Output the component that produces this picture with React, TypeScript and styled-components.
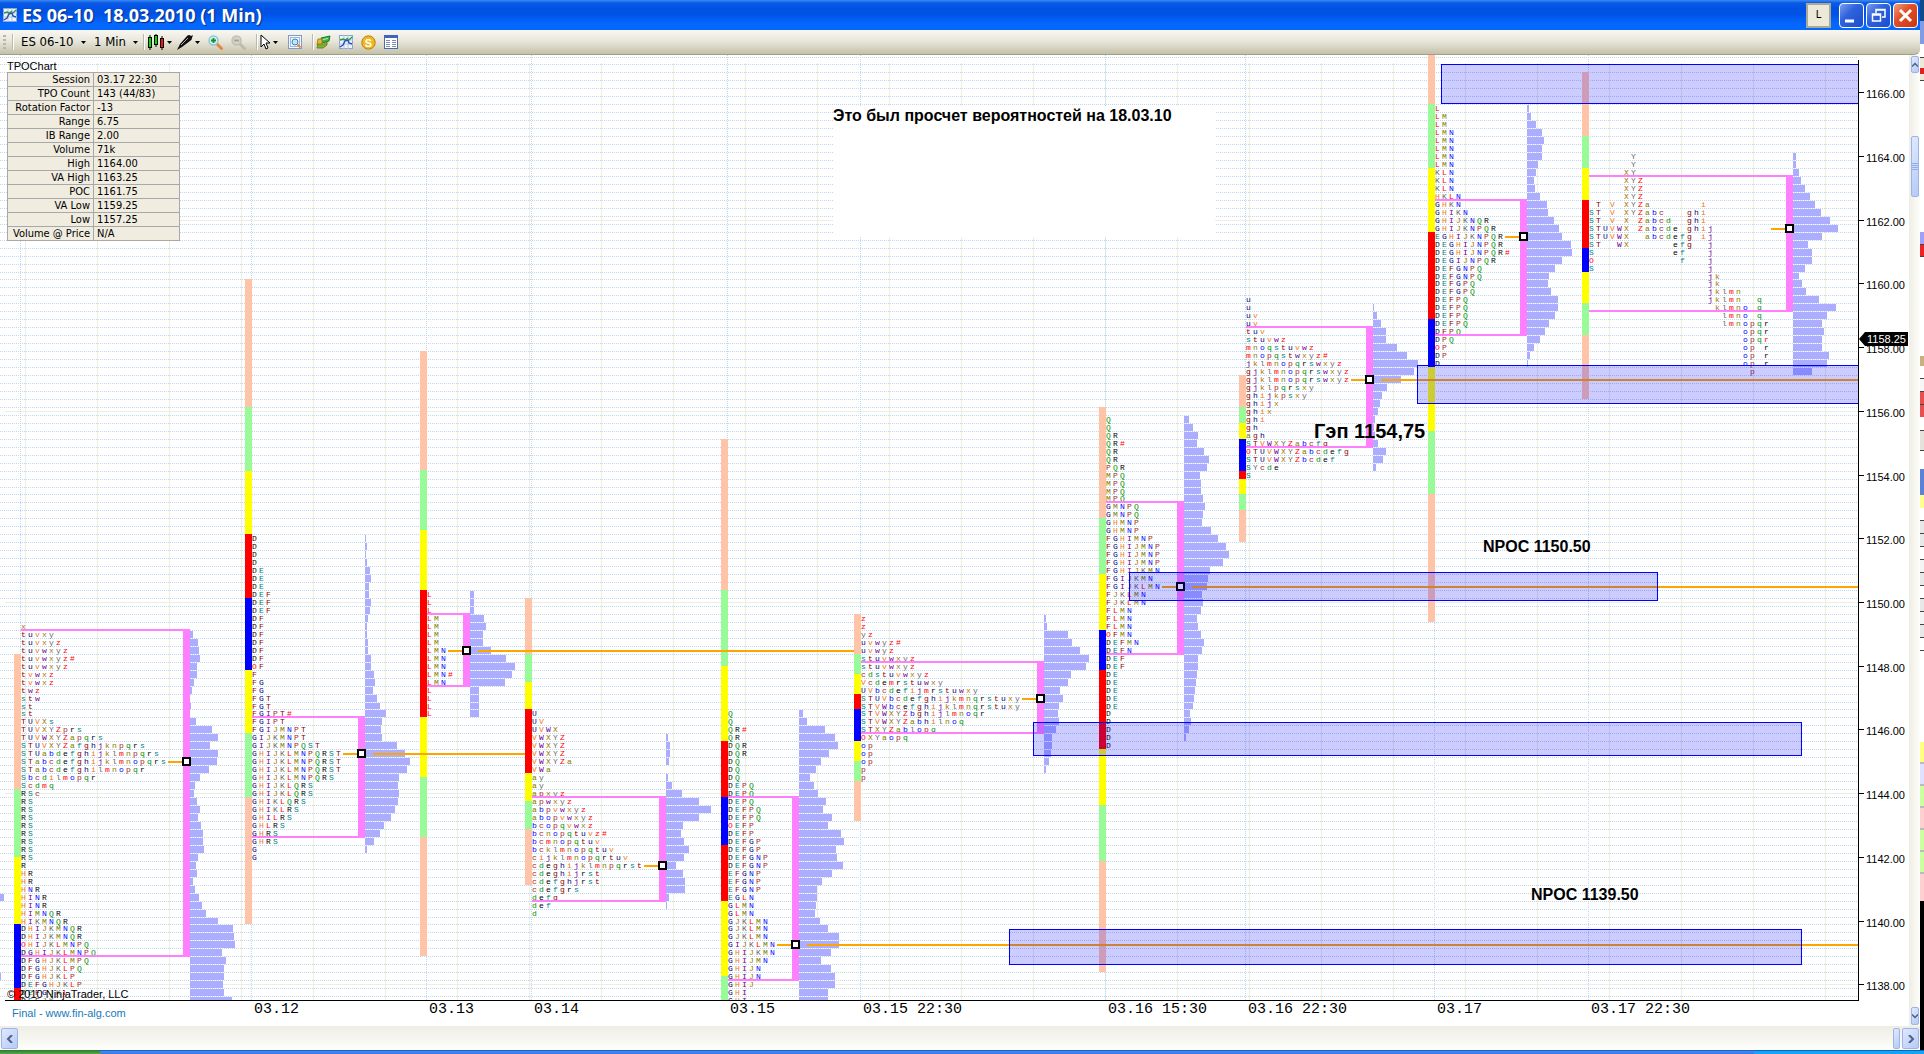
import React from "react";
import styled, { createGlobalStyle } from "styled-components";

const UI = '"DejaVu Sans Condensed", "Noto Sans", sans-serif';
const ARIAL = '"Liberation Sans", Arial, sans-serif';
const MONO = '"Liberation Mono", "Courier New", monospace';

const GlobalStyle = createGlobalStyle`
  * { box-sizing: border-box; }
  body { margin: 0; background: #fff; font-family: ${UI}; color: #000; }
`;

/* ---------- window frame ---------- */

const Screen = styled.div`
  display: flex;
  flex-direction: column;
  height: 100vh;
  overflow: hidden;
`;

const Desktop = styled.div`
  display: flex;
  flex: 1;
  min-height: 0;
`;

const Window = styled.main`
  display: flex;
  flex-direction: column;
  flex: 1;
  min-width: 0;
`;

const TitleBar = styled.header`
  display: flex;
  align-items: center;
  gap: 2px;
  height: 30px;
  padding: 0 2px 0 3px;
  background: linear-gradient(#3a8bf0 0, #0a5ae8 3px, #0053e1 8px, #0053e6 14px, #0468ff 24px, #0468ff 100%);
`;

const Title = styled.h1`
  flex: 1;
  margin: 0 0 0 3px;
  font: 700 18px/26px "Open Sans", "Noto Sans", sans-serif;
  color: #fff;
  text-shadow: 1px 1px 1px #0a2a80;
  white-space: pre;
`;

const LinkButton = styled.button`
  width: 25px;
  height: 25px;
  margin-right: 6px;
  padding: 0;
  border: 2px solid #aca899;
  background: #ece9d8;
  font: 11px/16px ${UI};
`;

const CaptionButton = styled.button<{ $close?: boolean }>`
  display: flex;
  align-items: center;
  justify-content: center;
  width: 25px;
  height: 25px;
  padding: 0;
  border: 1px solid #fff;
  border-radius: 4px;
  background: ${(p) =>
    p.$close
      ? "linear-gradient(135deg, #f0a080, #e2502a 40%, #c8370f)"
      : "linear-gradient(135deg, #7a9df0, #2f62dc 40%, #1a4ed0)"};
`;

const ToolBar = styled.nav`
  display: flex;
  align-items: center;
  height: 25px;
  padding-left: 3px;
  border-bottom: 1px solid #a2a07c;
  border-radius: 0 0 6px 0;
  background: linear-gradient(#f8f7f2, #e9e7dc 45%, #c3c1a9);
`;

const Grip = styled.span`
  width: 3px;
  height: 15px;
  margin-right: 4px;
  background: repeating-linear-gradient(#b9b7a5 0 2px, transparent 2px 4px);
`;

const Divider = styled.span`
  width: 2px;
  height: 16px;
  margin: 0 2px;
  border-left: 1px solid #bcbaa6;
  border-right: 1px solid #fff;
`;

const PickLabel = styled.label`
  display: flex;
  align-items: center;
  gap: 7px;
  margin: 0 3px 0 5px;
`;

const Pick = styled.select`
  appearance: none;
  border: 0;
  padding: 0;
  background: none;
  font: 13px/18px ${UI};
  color: #000;
`;

const Tool = styled.button<{ $gap?: number }>`
  display: flex;
  align-items: center;
  gap: 2px;
  padding: 0;
  margin-right: ${(p) => p.$gap ?? 8}px;
  border: 0;
  background: none;
`;

const Body = styled.div`
  display: flex;
  flex: 1;
  min-height: 0;
`;

const Chart = styled.section`
  position: relative;
  display: flex;
  flex-direction: column;
  flex: 1;
  min-width: 0;
  background: #fff;
`;

const PlotRow = styled.div`
  display: flex;
  flex: 1;
  min-height: 0;
`;

const Plot = styled.svg`
  flex: 1;
  min-width: 0;
  height: 100%;
  overflow: hidden;
`;

const PriceAxis = styled.svg`
  width: 51px;
  height: 100%;
  overflow: visible;
`;

const TimeAxis = styled.svg`
  width: 100%;
  height: 26px;
`;

/* ---------- overlays on the chart ---------- */

const InfoPanel = styled.div`
  position: absolute;
  left: 7px;
  top: 5px;
  font: 11px/12px ${ARIAL};
`;

const InfoTable = styled.table`
  width: 173px;
  border-collapse: collapse;
  table-layout: fixed;
  background: #f0ede0;
  font: 11px/13px ${UI};

  th, td {
    height: 14px;
    padding: 0 3px;
    border: 1px solid #a8a8a8;
    font-weight: normal;
    text-align: left;
    white-space: nowrap;
  }
  th {
    width: 86px;
    text-align: right;
  }
`;

const Note = styled.p<{ $x: number; $y: number; $size?: number }>`
  position: absolute;
  left: ${(p) => p.$x}px;
  top: ${(p) => p.$y}px;
  margin: 0;
  font: bold ${(p) => p.$size ?? 16}px/20px ${ARIAL};
  white-space: nowrap;
`;

const NoteBox = styled(Note)`
  width: 382px;
  height: 131px;
  background: #fff;
`;

const SiteLink = styled.a`
  position: absolute;
  left: 12px;
  bottom: 6px;
  font: 11px/14px ${ARIAL};
  color: #2079b8;
  text-decoration: none;
`;

/* ---------- scroll bars ---------- */

const VScroll = styled.div`
  display: flex;
  flex-direction: column;
  justify-content: space-between;
  width: 11px;
  padding: 1px 1px 1px 2px;
  background: linear-gradient(90deg, #eeede5, #fefefb);
`;

const HScroll = styled.div`
  display: flex;
  justify-content: space-between;
  height: 24px;
  padding: 2px 1px 1px;
  background: linear-gradient(#eeede5, #fefefb);
`;

const ScrollGroup = styled.div<{ $down?: boolean }>`
  display: flex;
  flex-direction: ${(p) => (p.$down ? "column" : "row")};
  gap: ${(p) => (p.$down ? 63 : 2)}px;
`;

const ScrollButton = styled.button<{ $w: number; $h: number }>`
  display: flex;
  align-items: center;
  justify-content: center;
  width: ${(p) => p.$w}px;
  height: ${(p) => p.$h}px;
  padding: 0;
  border: 1px solid #9db4e4;
  border-radius: 2px;
  background: linear-gradient(135deg, #dfe8fe, #b6cbf8);
`;

const Taskbar = styled.footer`
  display: flex;
  height: 4px;
  background: linear-gradient(#1f5fd0 0 1px, #3d86ea 1px 3px, #2b6fe0);
`;

const StartEdge = styled.span`
  width: 101px;
  border-radius: 0 4px 0 0;
  background: linear-gradient(#2c7a2c, #55a84f);
`;

const TrayEdge = styled.span`
  width: 170px;
  margin-left: auto;
  background: linear-gradient(#0c62c8 0 1px, #15a5f0 1px);
`;

/* ---------- neighbouring window, seen as a thin edge ---------- */

const Edge = styled.aside`
  display: flex;
  flex-direction: column;
  width: 4px;
  overflow: hidden;
  background: #fff;
`;

const EdgeCell = styled.span<{ $h: number; $c: string; $b?: boolean }>`
  flex: none;
  height: ${(p) => p.$h}px;
  background: ${(p) => p.$c};
  border-bottom: ${(p) => (p.$b ? "1px solid #444" : "0")};
`;

const EDGE: [number, string, boolean?][] = [
  [21, "#0c4a8c"], [23, "#7f9ce4"], [14, "#ffffff", true], [10, "#ece9d8"], [6, "#e02020"], [7, "#ece9d8", true],
  [151, "#ffffff"], [13, "#a0a0fa", true], [12, "#ee2222", true], [99, "#ffffff"], [10, "#c9b080"], [13, "#ffffff", true],
  [13, "#f6f6f6", true], [13, "#e85050", true], [12, "#e85050"], [14, "#ffffff", true], [20, "#e4e2da", true], [18, "#ffffff"],
  [26, "#5b82d6"], [13, "#ffff90"], [13, "#ffffff", true], [13, "#e8e8e8", true], [13, "#e8e8e8", true], [13, "#ffffff", true],
  [13, "#f4f4f4", true], [13, "#e8e8e8", true], [13, "#ffffff", true], [13, "#e8e8e8", true], [13, "#f4f4f4", true],
  [13, "#e8e8e8", true], [13, "#ffffff", true], [91, "#ffffff"], [20, "#ffff80"], [2, "#bbb"], [20, "#e0e0ff"], [2, "#bbb"],
  [20, "#ccffa0"], [2, "#bbb"], [20, "#ffd0d0"], [2, "#bbb"], [20, "#ccffa0"], [2, "#bbb"], [20, "#ccffa0"], [2, "#bbb"],
  [27, "#ffd0d0"], [160, "#000000"],
];

/* ---------- market profile data ---------- */

type Session = {
  x: number; // left edge of the first letter column
  bar: [number, string][]; // [top, colour] of each range segment
  barEnd: number;
  first: number; // row of the first letters
  rows: string[];
  spread?: boolean; // one column for each period instead of packed rows
  va: [number, number]; // value area: first row, row after the last
  vaX: number; // left edge of the value area bar
  poc: number;
  pocFrom: number;
  extend?: number; // where the naked POC line ends
  volFirst: number;
  vol: number[];
};

const P = "#ffc4a8";
const G = "#98fb98";
const Y = "#ffff00";
const R = "#ff0000";
const B = "#0000ff";
const END = 4000;

const rep = (s: string, n: number): string[] => Array(n).fill(s);

const SESSIONS: Session[] = [
  {
    x: 21, bar: [[654, P], [789, G], [857, Y], [924, B], [988, R]], barEnd: 1000, first: 71,
    rows: ["x", "tuvxy", "tuvxyz", "tuvwxyz", "tuvwxyz#", "tuvwxyz", "tvwxz", "tvwxz", "twz", "stw", "st", "st", "TUVXs",
      "TUVXYZprs", "TUVWXYZapqrs", "STUVXYZafghjknpqrs", "STUabdefghijklmnpqrs", "STabcdefghijklmnopqrs", "STabcdefghilmnopqr",
      "Sbcdilmopqr", "Scdmq", "RSc", ...rep("RS", 8), "R", "HR", "HR", "HNR", "HINR", "HINR", "HIMNQR", "HIKMNQR", "DHIJKMNQR",
      "DHIJKMNQR", "OHIJKLMNPQ", "DGHIJKLMNPQ", "DFGHJKLMPQ", "DFGHJKLPQ", "DFGHJKLP", "DEFGHJKLP", "DEFGJKL", "DEFJK"],
    va: [72, 113], vaX: 183, poc: 88, pocFrom: 168, volFirst: 72,
    vol: [3, 8, 9, 10, 7, 7, 4, 2, 0, 1, 0, 6, 22, 28, 20, 28, 27, 19, 10, 5, 4, 7, 10, 8, 11, 13, 13, 14, 8, 6, 7, 3, 5, 9, 12,
      16, 28, 43, 44, 45, 32, 36, 34, 34, 33, 34, 42],
  },
  {
    x: 252, bar: [[279, P], [407, G], [471, Y], [534, R], [598, B], [670, Y], [733, G], [797, P]], barEnd: 924, first: 60,
    rows: [...rep("D", 4), ...rep("DE", 3), ...rep("DEF", 3), ...rep("DF", 6), "OF", "F", "FG", "FG", "FGT", "FGT", "FGIPT#",
      "FGIPT", "FGIJMNPT", "GIJKMNPT", "GIJKMNPQST", ...rep("GHIJKLMNPQRST", 3), "GHIJKLMNPQRS", "GHIJKLQRS", "GHIJKLQRS",
      "GHIKLQRS", "GHIKLRS", "GHILRS", "GHLRS", "GHRS", "GHRS", "G", "G"],
    va: [83, 98], vaX: 358, poc: 87, pocFrom: 343, extend: 525, volFirst: 60,
    vol: [1, 2, 1, 2, 5, 6, 4, 4, 6, 5, 3, 2, 2, 3, 3, 6, 6, 9, 10, 8, 12, 15, 21, 17, 16, 17, 32, 40, 45, 42, 34, 33, 34, 33,
      30, 26, 19, 15, 9, 2],
  },
  {
    x: 427, bar: [[351, P], [470, G], [530, Y], [590, R], [717, Y], [777, G], [837, P]], barEnd: 956, first: 67,
    rows: ["L", "L", "L", ...rep("LM", 4), ...rep("LMN", 3), "LMN#", "LMN", ...rep("L", 4)],
    va: [70, 79], vaX: 463, poc: 74, pocFrom: 448, extend: 854, volFirst: 67,
    vol: [4, 4, 4, 14, 16, 13, 13, 21, 36, 45, 42, 35, 9, 9, 9, 9],
  },
  {
    x: 532, bar: [[598, P], [654, G], [682, Y], [709, R], [773, Y], [801, G], [829, P]], barEnd: 885, first: 82,
    rows: ["U", "UV", "UVWX", ...rep("VWXYZ", 3), "VWXYZa", "VWa", "ay", "ay", "apxyz", "apwxyz", "abpvwxyz", "abopvwxyz",
      "bcopqvwxz", "bcnopqtuvz#", "bcmnopqtuv", "bcklmnopqtuv", "cijklmnopqrtuv", "cdeghijklmnpqrst", "cdeghijrst",
      "cdefghjrst", "cdefgrs", "defg", "def", "d"],
    va: [93, 106], vaX: 659, poc: 101, pocFrom: 644, volFirst: 85,
    vol: [2, 4, 4, 3, 0, 2, 6, 16, 33, 45, 33, 17, 15, 18, 23, 18, 10, 17, 19, 19, 3, 1],
  },
  {
    x: 728, bar: [[439, P], [590, G], [666, Y], [741, R], [797, B], [845, R], [901, Y], [976, G]], barEnd: 1000, first: 82,
    rows: ["Q", "Q", "QR#", "QR", "DQR", "DQR", "DQ", "DQ", "DQ", ...rep("DEPQ", 3), "DEFPQ", "DEFPQ", "OEFP", "DEFP", "DEFGP",
      "DEFGP", "DEFGNP", "DEFGNP", ...rep("EFGNP", 3), "EGLN", "GLMN", "GLMN", ...rep("GJKLMN", 3), "GIJKLMN", "GHIJKMN",
      "GHIJMN", "GHIJN", "GHIJN", "GHIJ", "GHI", "GHI"],
    va: [93, 116], vaX: 792, poc: 111, pocFrom: 777, extend: END, volFirst: 82,
    vol: [4, 8, 26, 36, 39, 30, 22, 17, 11, 15, 19, 27, 24, 33, 29, 42, 45, 37, 38, 44, 33, 23, 18, 18, 17, 16, 21, 29, 40, 40,
      32, 22, 32, 36, 36, 29, 29],
  },
  {
    x: 861, bar: [[614, P], [654, G], [674, Y], [694, R], [709, B], [741, Y], [761, G], [781, P]], barEnd: 821, first: 70,
    rows: ["z", "z", "yz", "uvwyz#", "uvwyz", "stuvwxyz", "stuvwxyz", "cdstuvwxyz", "Vcdemrstuwxy", "UVbcdefijmrstuwxy",
      "STUVbcdefghijkmnqrstuxy", "STVWbcefghijklmnqrstuxy", "STVWXYZbghijlmnoqr", "STVWXYZabhilnoq", "STXYZablopq", "OXYaopq",
      "op", "op", "op", "p", "p"],
    va: [76, 85], vaX: 1037, poc: 80, pocFrom: 1022, volFirst: 70,
    vol: [2, 3, 24, 28, 36, 45, 42, 27, 24, 16, 19, 15, 14, 15, 12, 8, 8, 7, 5, 2],
  },
  {
    x: 1106, bar: [[407, P], [518, G], [574, Y], [630, B], [670, R], [749, Y], [805, G], [861, P]], barEnd: 972, first: 45,
    rows: ["Q", "Q", "QR", "QR#", "QR", "QR", "PQR", ...rep("MPQ", 4), "GMNPQ", "GMNPQ", "GHMNP", "GHMNP", "FGHIMNP",
      ...rep("FGHIJMNP", 3), "FGHIJKMN", "FGIJKMN", "FGIJKLMN", "FJKLMN", "FJKLMN", ...rep("FLMN", 3), "OFMN", "DEFMN", "DEFN",
      "DEF", "DEF", ...rep("DE", 5), ...rep("D", 5)],
    va: [56, 75], vaX: 1177, poc: 66, pocFrom: 1162, extend: END, volFirst: 45,
    vol: [5, 9, 14, 13, 20, 25, 23, 16, 17, 17, 19, 21, 19, 18, 27, 34, 42, 45, 39, 26, 24, 23, 18, 19, 17, 13, 14, 17, 20, 18,
      14, 14, 13, 12, 11, 10, 9, 6, 7, 5, 2],
  },
  {
    x: 1246, bar: [[375, P], [407, G], [423, Y], [439, B], [471, R], [479, Y], [494, G], [510, P]], barEnd: 542, first: 30,
    rows: ["u", "u", "uv", "uv", "tuv", "stuvwz", "mnoqstuvwz", "mnopqstwxyz#", "jklmnopqrswxyz", "gjklmnopqrswxyz",
      "gjklmnopqrswxyz", "gjklpqrsxy", "ghijkpsxy", "ghijx", "ghix", "ghi", "gh", "agh", "STVWXYZabcfg", "OTUVWXYZabcdefg",
      "STUVWXYZbcdef", "SYcde", "S"],
    va: [34, 49], vaX: 1366, poc: 40, pocFrom: 1351, extend: END, volFirst: 31,
    vol: [1, 4, 8, 13, 13, 24, 34, 45, 41, 28, 14, 9, 7, 5, 2, 1, 2, 5, 13, 10, 3],
  },
  {
    x: 1435, bar: [[55, P], [104, G], [168, Y], [232, R], [319, B], [367, Y], [431, G], [494, P]], barEnd: 622, first: 6,
    rows: ["L", "LM", "LM", ...rep("LMN", 5), ...rep("KLN", 3), "HKLN", "GHKN", "GHIKN", "GHIJKNQR", "GHIJKNPQR", "EGHIJKNPQR",
      "DEGHIJNPQR", "DEGHIJNPQR#", "DEGIJNPQR", "DEFGNPQ", "DEFGNPQ", "DEFGPQ", "DEFGPQ", ...rep("DEFPQ", 4), "DFPQ", "DPQ",
      "OP", "DP", "D"],
    va: [18, 35], vaX: 1520, poc: 22, pocFrom: 1505, volFirst: 6,
    vol: [2, 4, 9, 15, 17, 15, 15, 11, 9, 7, 8, 13, 20, 21, 27, 32, 35, 44, 45, 35, 28, 22, 21, 24, 31, 31, 28, 22, 18, 13, 7,
      3, 1],
  },
  {
    x: 1589, bar: [[72, P], [136, G], [168, Y], [200, R], [248, B], [272, Y], [303, G], [335, P]], barEnd: 399, first: 12,
    spread: true,
    rows: ["Y", "Y", "XY", "XYZ", "XYZ", "XYZ", "TVXYZai", "STVXYZabcghi", "STVXZabcdghi", "STUVWXZabcdeghij", "STUVWXabcdefgij",
      "STWXefgj", "Sefj", "Ofj", "Sj", "jk", "jk", "jklmn", "jklmnq", "klmnoq", "lmnoq", "lmnopqr", "opqr", "opqr", "opr", "opr",
      "opr", "p"],
    va: [15, 32], vaX: 1786, poc: 21, pocFrom: 1771, volFirst: 12,
    vol: [3, 3, 6, 8, 12, 17, 22, 28, 37, 45, 29, 15, 19, 19, 12, 6, 9, 13, 26, 43, 34, 29, 31, 29, 29, 36, 34, 19],
  },
];

const INK = ["#000000", "#008080", "#8b0000", "#00007c", "#f07818", "#700090", "#a87808", "#686868", "#ff0000", "#808000",
  "#0000ff", "#a52a2a", "#009000"];
const PERIODS = "DEFGHIJKLMNPQRSTUVWXYZabcdefghijklmnopqrstuvwxyz";

const ink = (c: string) => (c === "#" || c === "O" ? "#ff0000" : INK[PERIODS.indexOf(c) % 13]);

const TOP = 55;
const COL = 7;

/* top of a quarter-point row; row 4 is 1166.00 and every 27th row is a pixel shorter */
const rowY = (k: number) => 64 + 8 * (k - 1) - Math.floor((k - 1) / 27);
const priceY = (price: number) => rowY(4 + (1166 - price) * 4) + 5;

const ZONES: [number, number, number, number][] = [
  [1441, 64, END, 103],
  [1417, 365, END, 403],
  [1129, 572, 1657, 600],
  [1033, 722, 1801, 755],
  [1009, 929, 1801, 964],
];

const Letters = ({ s }: { s: Session }) => (
  <g fontFamily={MONO} fontSize="8">
    {s.rows.map((row, r) => (
      <text key={r} y={rowY(s.first + r) + 7}>
        {[...row].map((c, i) => {
          const col = s.spread ? Math.max(0, PERIODS.indexOf(c) - PERIODS.indexOf("S")) : i;
          const last = s.spread && c === "r" && s.first + r === 35;
          return (
            <tspan key={i} x={s.x + col * COL} fill={last ? "#ff0000" : ink(c)}>
              {c}
            </tspan>
          );
        })}
      </text>
    ))}
  </g>
);

const RangeBar = ({ s }: { s: Session }) => (
  <g>
    {s.bar.map(([y, color], i) => {
      const end = i + 1 < s.bar.length ? s.bar[i + 1][0] : s.barEnd;
      return <rect key={y} x={s.x - 7} y={y} width={7} height={end - y} fill={color} />;
    })}
  </g>
);

const Volume = ({ s }: { s: Session }) => (
  <g fill="#adadff">
    {s.vol.map((w, i) => {
      const y = rowY(s.volFirst + i);
      return <rect key={i} x={s.vaX + 7} y={y + 1} width={w} height={rowY(s.volFirst + i + 1) - y - 1} />;
    })}
  </g>
);

const ValueArea = ({ s }: { s: Session }) => {
  const top = rowY(s.va[0]) - 1;
  const bottom = rowY(s.va[1]) + 1;
  return (
    <g fill="#ff80ff">
      <rect x={s.x} y={top} width={s.vaX - s.x} height={2} />
      <rect x={s.x} y={bottom - 2} width={s.vaX - s.x} height={2} />
      <rect x={s.vaX} y={top} width={7} height={bottom - top} />
    </g>
  );
};

const PocMark = ({ s }: { s: Session }) => {
  const y = rowY(s.poc);
  return (
    <g>
      <rect x={s.pocFrom} y={y + 4} width={14} height={2} fill="#ffa500" />
      {s.extend && <rect x={s.vaX + 15} y={y + 4} width={s.extend - s.vaX - 15} height={2} fill="#ffa500" />}
      <rect x={s.vaX} y={y + 1} width={7} height={7} fill="#fff" stroke="#000" strokeWidth={2} />
    </g>
  );
};

const Grid = () => (
  <g>
    <g fill="#efede0">
      {Array.from({ length: 40 }, (_, i) => (
        <rect key={i} x={25 + 72 * i} y={63} width={1} height={END} />
      ))}
      {[1162, 1156, 1150, 1144, 1138].map((p) => (
        <rect key={p} x={5} y={priceY(p) - 1} width={END} height={1} />
      ))}
    </g>
    <g stroke="#bcd8f2" strokeDasharray="1 1">
      {Array.from({ length: 119 }, (_, k) => (
        <line key={k} x1={0} x2={END} y1={rowY(k) + 0.5} y2={rowY(k) + 0.5} />
      ))}
      {SESSIONS.map((s) => (
        <line key={s.x} x1={s.x - 0.5} x2={s.x - 0.5} y1={TOP} y2={1000} />
      ))}
    </g>
  </g>
);

const PRICES = Array.from({ length: 15 }, (_, i) => 1166 - 2 * i);

const DATES: [number, string][] = [
  [254, "03.12"], [429, "03.13"], [534, "03.14"], [730, "03.15"], [863, "03.15 22:30"], [1108, "03.16 15:30"],
  [1248, "03.16 22:30"], [1437, "03.17"], [1591, "03.17 22:30"],
];

const INFO: [string, string][] = [
  ["Session", "03.17 22:30"], ["TPO Count", "143 (44/83)"], ["Rotation Factor", "-13"], ["Range", "6.75"], ["IB Range", "2.00"],
  ["Volume", "71k"], ["High", "1164.00"], ["VA High", "1163.25"], ["POC", "1161.75"], ["VA Low", "1159.25"], ["Low", "1157.25"],
  ["Volume @ Price", "N/A"],
];

/* ---------- icons ---------- */

const Caret = () => (
  <svg width="5" height="3" aria-hidden="true">
    <path d="M0 0h5L2.5 3z" fill="#000" />
  </svg>
);

const ChartIcon = () => (
  <svg width="14" height="14" viewBox="0 0 14 14">
    <rect x=".5" y=".5" width="13" height="13" fill="#eef3fd" stroke="#8ca4cc" />
    <path d="M0 5h14M0 9h14M5 0v14M9 0v14" stroke="#b5c5e4" />
    <path d="M1 5l3-1 2 1 3-2M10 5l3-3" fill="none" stroke="#2f9a3a" strokeWidth="1.4" />
    <path d="M1 12l3-2 2-4 3-1 1 3 3 1" fill="none" stroke="#2450b8" strokeWidth="1.4" />
  </svg>
);

const CandlesIcon = () => (
  <svg width="18" height="16" viewBox="0 0 18 16">
    <path d="M3 1v15M9 0v13M15 2v14" stroke="#000" />
    <rect x="1.5" y="3.500" width="3" height="10" fill="#00e000" stroke="#000" />
    <rect x="7.500" y="1.500" width="3" height="9" fill="#00e000" stroke="#000" />
    <rect x="13.500" y="4.500" width="3" height="9" fill="#ff1010" stroke="#000" />
  </svg>
);

const PenIcon = () => (
  <svg width="16" height="15" viewBox="0 0 16 15">
    <path d="M0 15L3 9 10 1q2-2 4 0l2-1-1 3q0 2-2 3L5 12z" fill="#111" />
    <path d="M4 10l7-7" stroke="#aaa" />
  </svg>
);

const ZoomIcon = ({ plus }: { plus?: boolean }) => (
  <svg width="15" height="15" viewBox="0 0 15 15">
    <path d="M8.500 8.500l5 5" stroke={plus ? "#e8873a" : "#bdbbb0"} strokeWidth="3" strokeLinecap="round" />
    <circle cx="5.500" cy="5.500" r="4.500" fill={plus ? "#d4f0ec" : "#d4d2c8"} stroke={plus ? "#8cc4d8" : "#c0beb4"} strokeWidth="1.400" />
    <path d={plus ? "M3 5.500h5M5.500 3v5" : "M3 5.500h5"} stroke={plus ? "#109030" : "#a5a398"} strokeWidth="1.800" />
  </svg>
);

const CursorIcon = () => (
  <svg width="11" height="16" viewBox="0 0 11 16">
    <path d="M1 1v12l3-3 2 5 2-1-2-5h4z" fill="#fff" stroke="#000" />
  </svg>
);

const InspectIcon = () => (
  <svg width="14" height="14" viewBox="0 0 14 14">
    <rect x=".5" y=".5" width="13" height="13" fill="#f2f7ff" stroke="#7f9cc8" />
    <rect x="2.500" y="2.500" width="9" height="9" fill="none" stroke="#9db9e0" />
    <circle cx="7" cy="7" r="3" fill="#bfe6f2" stroke="#3c85b8" />
    <path d="M9.500 9.500l3 3" stroke="#e8873a" strokeWidth="2" />
  </svg>
);

const MoneyIcon = () => (
  <svg width="15" height="14" viewBox="0 0 15 14">
    <path d="M5 3l9-2-1 5-7 2z" fill="#3db54a" stroke="#1f7a2c" />
    <path d="M7 4.500l5-1" stroke="#bdf0b8" />
    <path d="M2 4h4v6H1z" fill="#e0bc40" stroke="#a8820f" />
    <path d="M2 9h6l3-2v3l-4 3H1z" fill="#6db83a" stroke="#8a7a10" />
  </svg>
);

const CoinIcon = () => (
  <svg width="15" height="15" viewBox="0 0 15 15">
    <circle cx="7.500" cy="7.500" r="6.700" fill="#f2b81e" stroke="#b8820c" />
    <text x="7.500" y="11.500" textAnchor="middle" fontFamily={ARIAL} fontSize="11" fontWeight="bold" fill="#fff">
      S
    </text>
  </svg>
);

const ListIcon = () => (
  <svg width="14" height="14" viewBox="0 0 14 14">
    <rect x=".5" y=".5" width="13" height="13" fill="#fff" stroke="#4a6cae" />
    <path d="M0 1.500h14" stroke="#3f66b8" strokeWidth="3" />
    <path d="M2 5.500h4M8 5.500h4M2 7.500h4M8 7.500h4M2 9.500h4M8 9.500h4M2 11.500h4M8 11.500h4" stroke="#7d8fb0" />
  </svg>
);

const Chevron = ({ d }: { d: string }) => (
  <svg width="8" height="8" viewBox="0 0 8 8">
    <path d={d} fill="none" stroke="#4d6185" strokeWidth="2" />
  </svg>
);

export default function App() {
  return (
    <Screen>
      <GlobalStyle />
      <Desktop>
        <Window>
          <TitleBar>
            <ChartIcon />
            <Title>{"ES 06-10  18.03.2010 (1 Min)"}</Title>
            <LinkButton>L</LinkButton>
            <CaptionButton aria-label="Minimize">
              <svg width="17" height="17"><path d="M2 14h9" stroke="#fff" strokeWidth="3" /></svg>
            </CaptionButton>
            <CaptionButton aria-label="Restore">
              <svg width="17" height="17" fill="none" stroke="#fff">
                <path d="M6 6V2.500h9V10h-3M6 3h9" strokeWidth="1.500" />
                <path d="M2.500 7h8v7h-8zM2 8h9" strokeWidth="1.500" />
              </svg>
            </CaptionButton>
            <CaptionButton $close aria-label="Close">
              <svg width="17" height="17"><path d="M3 3l11 11M14 3L3 14" stroke="#fff" strokeWidth="3" /></svg>
            </CaptionButton>
          </TitleBar>
          <ToolBar>
            <Grip />
            <Divider />
            <PickLabel>
              <Pick aria-label="Instrument"><option>ES 06-10</option></Pick>
              <Caret />
            </PickLabel>
            <PickLabel>
              <Pick aria-label="Interval"><option>1 Min</option></Pick>
              <Caret />
            </PickLabel>
            <Divider />
            <Tool aria-label="Chart style" $gap={5}><CandlesIcon /><Caret /></Tool>
            <Tool aria-label="Drawing tools"><PenIcon /><Caret /></Tool>
            <Tool aria-label="Zoom in"><ZoomIcon plus /></Tool>
            <Tool aria-label="Zoom out"><ZoomIcon /></Tool>
            <Divider />
            <Tool aria-label="Cursor" $gap={10}><CursorIcon /><Caret /></Tool>
            <Tool aria-label="Data box"><InspectIcon /></Tool>
            <Divider />
            <Tool aria-label="Account"><MoneyIcon /></Tool>
            <Tool aria-label="Indicators"><ChartIcon /></Tool>
            <Tool aria-label="Strategies"><CoinIcon /></Tool>
            <Tool aria-label="Properties"><ListIcon /></Tool>
          </ToolBar>
          <Body>
            <Chart>
              <PlotRow>
                <Plot shapeRendering="crispEdges">
                  <g transform={`translate(0 ${-TOP})`}>
                    <Grid />
                    <rect x={0} y={rowY(105) + 1} width={4} height={7} fill="#adadff" />
                    <rect x={0} y={rowY(115) + 1} width={1} height={7} fill="#adadff" />
                    {SESSIONS.map((s) => (
                      <g key={s.x}>
                        <RangeBar s={s} />
                        <Volume s={s} />
                        <Letters s={s} />
                        <ValueArea s={s} />
                      </g>
                    ))}
                    {SESSIONS.map((s) => (
                      <PocMark key={s.x} s={s} />
                    ))}
                    {ZONES.map(([x1, y1, x2, y2]) => (
                      <rect key={y1} x={x1 + 0.5} y={y1 + 0.5} width={x2 - x1} height={y2 - y1} fill="#0000ff" fillOpacity="0.2" stroke="#0000ff" />
                    ))}
                    <text x={7} y={998} fontFamily={ARIAL} fontSize="11">© 2010 NinjaTrader, LLC</text>
                  </g>
                </Plot>
                <PriceAxis>
                  <g transform={`translate(0 ${-TOP})`} fontFamily={ARIAL} fontSize="11">
                    <rect x={0} y={60} width={1} height={941} />
                    {PRICES.map((p) => (
                      <g key={p}>
                        <rect x={1} y={priceY(p) - 1} width={5} height={1} />
                        <text x={8} y={priceY(p) + 5}>{p.toFixed(2)}</text>
                      </g>
                    ))}
                    <path d="M1 339l6-7h43v14H7z" />
                    <text x={9} y={343} fill="#fff">1158.25</text>
                  </g>
                </PriceAxis>
              </PlotRow>
              <TimeAxis fontFamily={MONO} fontSize="15">
                <svg x={5} width="100%" height={1}>
                  <rect width="100%" height={1} />
                </svg>
                <rect x="100%" width={50} height={1} fill="#fff" transform="translate(-50 0)" />
                {DATES.map(([x, label]) => (
                  <text key={x} x={x} y={13}>{label}</text>
                ))}
              </TimeAxis>
              <InfoPanel>
                TPOChart
                <InfoTable>
                  <tbody>
                    {INFO.map(([name, value]) => (
                      <tr key={name}>
                        <th scope="row">{name}</th>
                        <td>{value}</td>
                      </tr>
                    ))}
                  </tbody>
                </InfoTable>
              </InfoPanel>
              <NoteBox $x={833} $y={51}>Это был просчет вероятностей на 18.03.10</NoteBox>
              <Note $x={1314} $y={366} $size={20}>Гэп 1154,75</Note>
              <Note $x={1483} $y={482}>NPOC 1150.50</Note>
              <Note $x={1531} $y={830}>NPOC 1139.50</Note>
              <SiteLink href="#site">Final - www.fin-alg.com</SiteLink>
            </Chart>
            <VScroll>
              <ScrollGroup $down>
                <ScrollButton $w={8} $h={17} aria-label="Scroll up"><Chevron d="M0 6l4-4 4 4" /></ScrollButton>
                <ScrollButton $w={8} $h={61} aria-label="Scroll position">
                  <svg width="6" height="8"><path d="M0 .5h6M0 2.500h6M0 4.500h6M0 6.500h6" stroke="#8fb0ee" /></svg>
                </ScrollButton>
              </ScrollGroup>
              <ScrollButton $w={8} $h={18} aria-label="Scroll down"><Chevron d="M0 2l4 4 4-4" /></ScrollButton>
            </VScroll>
          </Body>
          <HScroll>
            <ScrollButton $w={17} $h={21} aria-label="Scroll left"><Chevron d="M6 0L2 4l4 4" /></ScrollButton>
            <ScrollGroup>
              <ScrollButton $w={7} $h={21} aria-label="Scroll thumb" />
              <ScrollButton $w={17} $h={21} aria-label="Scroll right"><Chevron d="M2 0l4 4-4 4" /></ScrollButton>
            </ScrollGroup>
          </HScroll>
        </Window>
        <Edge aria-hidden="true">
          {EDGE.map(([h, c, b], i) => (
            <EdgeCell key={i} $h={h} $c={c} $b={b} />
          ))}
        </Edge>
      </Desktop>
      <Taskbar>
        <StartEdge />
        <TrayEdge />
      </Taskbar>
    </Screen>
  );
}
